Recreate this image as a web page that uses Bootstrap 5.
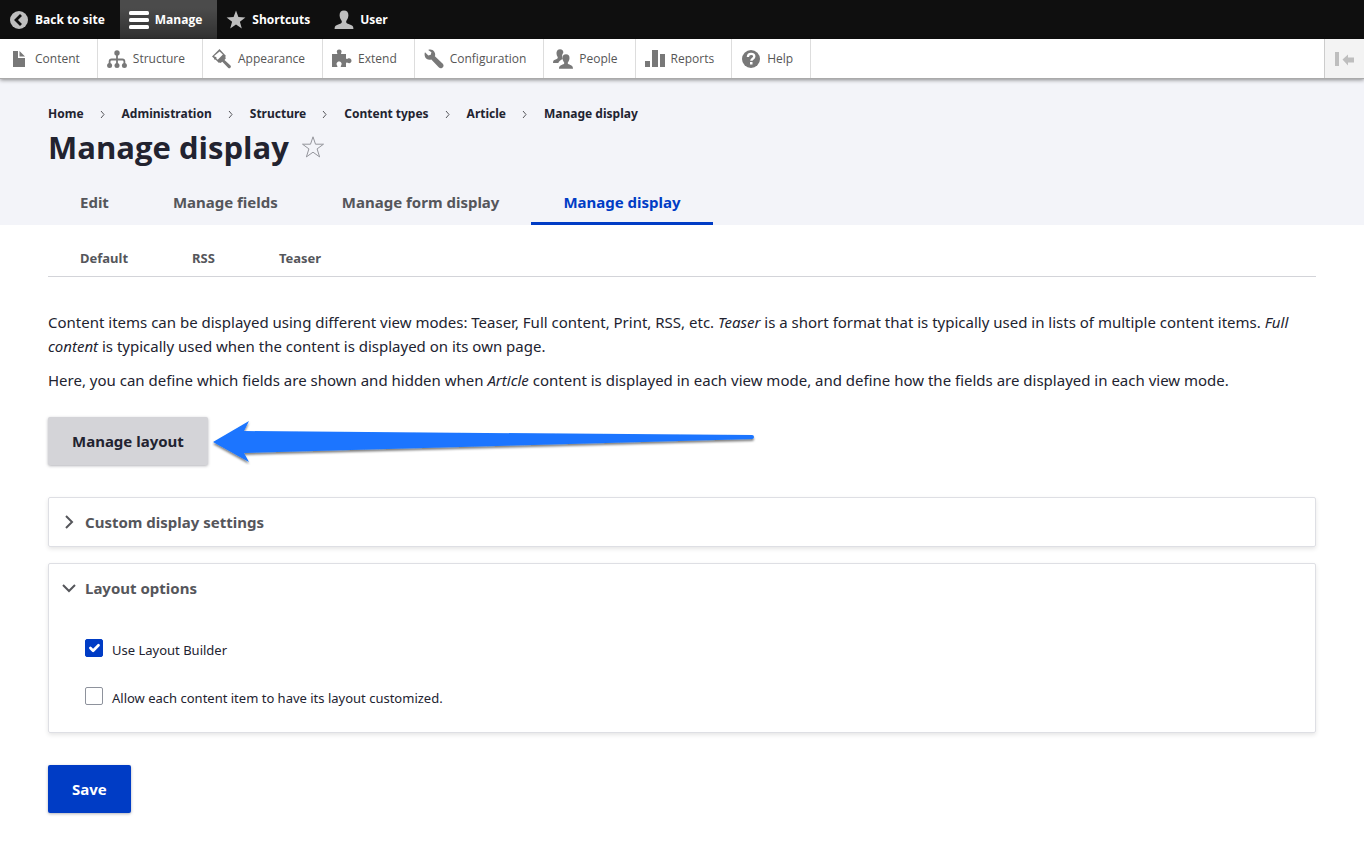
<!DOCTYPE html>
<html lang="en">
<head>
<meta charset="utf-8">
<meta name="viewport" content="width=device-width, initial-scale=1">
<title>Manage display</title>
<link rel="stylesheet" href="https://cdn.jsdelivr.net/npm/bootstrap@5.3.0/dist/css/bootstrap.min.css">
<style>
  :root {
    --ink: #222330;
    --muted: #55565b;
    --blue: #003cc5;
  }
  body { font: 15px/24px "Noto Sans", "Open Sans", sans-serif; color: var(--ink); background: #fff; }
  a { color: inherit; text-decoration: none; }

  .admin-bar, .admin-tray { font-family: "Open Sans", sans-serif; font-size: 12px; line-height: 20px; }
  .admin-bar a, .admin-tray a { height: 39px; padding: 0 17px 0 9px; gap: 6px; }
  .admin-bar svg, .admin-tray svg { width: 20px; height: 20px; }

  .admin-bar { background: #0f0f0f; font-weight: 700; color: #fff; }
  .admin-bar a { padding-right: 15px; }
  .admin-bar .open { background: linear-gradient(rgba(255,255,255,.25) 20%, transparent 200%); }
  .admin-bar svg { fill: #bebebe; }
  .admin-bar .open svg { fill: #fff; }

  .admin-tray { background: #fff; border-bottom: 1px solid #aaa; box-shadow: 0 1px 4px rgba(0,0,0,.45); color: #565656; position: relative; }
  .admin-tray a { border-right: 1px solid #ddd; }
  .admin-tray svg { fill: #787878; }
  .tray-toggle { width: 40px; background: #f3f3f3; border: 0; border-left: 1px solid #ccc; padding: 0; }
  .admin-tray .tray-toggle svg { fill: #bebebe; }

  .page-head { background: #f3f4f9; padding: 24px 48px 0; }
  .crumbs { font-size: 12px; line-height: 22px; font-weight: 700; --bs-breadcrumb-margin-bottom: 0; }
  .crumbs svg { width: 38px; height: 12px; }
  .page-head h1 { font: 700 31px/44px "Open Sans", sans-serif; margin: 0; }
  .star-btn { border: 0; background: none; padding: 0; line-height: 0; }

  .tabs-main { margin-top: 10px; }
  .tabs-main a { padding: 11px 32px 8px; border-bottom: 3px solid transparent; font-size: 15px; line-height: 24px; font-weight: 700; color: var(--muted); }
  .tabs-main a.current { color: var(--blue); border-color: var(--blue); }
  .tabs-sub { border-bottom: 1px solid #d3d4d9; }
  .tabs-sub a { padding: 8px 32px 8px; font-size: 13px; line-height: 20px; font-weight: 700; color: var(--muted); }

  .page-body { padding: 15px 48px 28px; }
  .help-text { padding: 33px 0 15px; }
  .help-text p { margin: 0 0 10px; }

  .btn-cms { border: 0; border-radius: 2px; padding: 12px 24px; font-size: 15px; line-height: 24px; font-weight: 700; box-shadow: 0 1px 3px rgba(34,35,48,.35); }
  .btn-grey, .btn-grey:hover { background: #d4d4d8; color: var(--ink); }
  .btn-blue, .btn-blue:hover { background: var(--blue); color: #fff; }
  .section-gap { margin-top: 32px; }

  .panel { border: 1px solid #dedfe4; border-radius: 2px; box-shadow: 0 2px 4px rgba(0,0,0,.1); }
  .panel summary { list-style: none; display: flex; align-items: center; gap: 8px; padding: 12px; font-size: 15px; line-height: 24px; font-weight: 700; color: var(--muted); }
  .panel summary::-webkit-details-marker { display: none; }
  .panel summary svg { width: 16px; height: 16px; fill: none; stroke: var(--muted); stroke-width: 2; }
  .panel[open] summary svg { transform: rotate(90deg); }
  .panel-inner { padding: 24px 36px; font-size: 13px; line-height: 20px; }
  .panel-inner label { padding-top: 4px; }
  .panel-inner .form-check-input { width: 18px; height: 18px; margin: 0 1px 0 0; border: 1px solid #8e929c; border-radius: 2px; }
  .panel-inner .form-check-input:checked { background-color: var(--blue); border-color: var(--blue); background-size: 18px; }
</style>
</head>
<body>

<nav class="admin-bar d-flex" aria-label="Toolbar">
  <a href="#" class="d-flex align-items-center"><svg viewBox="0 0 20 20"><circle cx="10" cy="10" r="9"/><path d="M12 5l-5 5 5 5" fill="none" stroke="#0f0f0f" stroke-width="2.8"/></svg>Back to site</a>
  <a href="#" class="open d-flex align-items-center"><svg viewBox="0 0 20 20"><rect y="1" width="20" height="4" rx="1.5"/><rect y="8" width="20" height="4" rx="1.5"/><rect y="15" width="20" height="4" rx="1.5"/></svg>Manage</a>
  <a href="#" class="d-flex align-items-center"><svg viewBox="0 0 20 20"><path d="M10 .5l2.4 6.600 7 .3-5.500 4.300 1.900 6.800L10 14.600l-5.800 3.900 1.900-6.800L.6 7.400l7-.3z"/></svg>Shortcuts</a>
  <a href="#" class="d-flex align-items-center"><svg viewBox="0 0 20 20"><path d="M10 .5c3 0 4.600 2 4.400 4.900-.2 2.500-1.200 4.200-2 5.300-.5.900-.2 2.200.8 2.700 2.600 1 5.500 1.800 5.900 3.300.2.900.3 1.700.3 2.300H.6c0-.6 0-1.400.3-2.300.4-1.500 3.300-2.300 5.900-3.300 1-.5 1.300-1.800.8-2.700-.8-1.100-1.800-2.800-2-5.300C5.400 2.500 7 .5 10 .5z"/></svg>User</a>
</nav>

<nav class="admin-tray d-flex" aria-label="Administration menu">
  <a href="#" class="d-flex align-items-center"><svg viewBox="0 0 20 20"><path d="M4 2h5v7h7v9H4z"/><path d="M10.500 2l5.500 5.500h-5.500z"/></svg>Content</a>
  <a href="#" class="d-flex align-items-center"><svg viewBox="0 0 20 20"><circle cx="10" cy="4" r="2.700"/><circle cx="2.600" cy="16.500" r="2.500"/><circle cx="10" cy="16.500" r="2.500"/><circle cx="17.400" cy="16.500" r="2.500"/><path d="M10 5v11M2.600 16v-3.500q0-2 2-2h10.800q2 0 2 2V16" fill="none" stroke="#787878" stroke-width="1.800"/></svg>Structure</a>
  <a href="#" class="d-flex align-items-center"><svg viewBox="0 0 20 20"><path d="M7.500 0L0 7.500l2 1.700.2 1.400 1.500.1 3.300 3.300L14 7z"/><path d="M7.600 2.400l3.300 3.200-5.200 5.200-1.200-1.100-.2-1.700-1.500-.3-.7-.7z" fill="#fff"/><path d="M12 7l2 2-1.500 2 6 5.600a1.600 1.600 0 0 1-2.200 2.300l-6-6.100L8.500 14l-2-1.500z"/></svg>Appearance</a>
  <a href="#" class="d-flex align-items-center"><svg viewBox="0 0 20 20"><path d="M0 5h4.700c.9 0 .8-.7.4-1.300C4.300 2.200 5.200.5 7.200.5s2.900 1.700 2.100 3.200c-.4.600-.5 1.300.4 1.300H14v4c0 1 .8 1.200 1.500.8 2-1.200 4 0 4 2s-2 3.200-4 2c-.7-.4-1.500-.2-1.500.8V18H9.500c-.9 0-1-.7-.5-1.300 1.300-1.700.5-4.200-1.900-4.200s-3.200 2.500-1.900 4.200c.5.600.4 1.300-.5 1.300H0z"/></svg>Extend</a>
  <a href="#" class="d-flex align-items-center"><svg viewBox="0 0 20 20"><path d="M1 3.200l3.300 3.200 2.500-.7.600-2.500L4.200.9C6.700.1 9 .8 10.300 2.700c1 1.500 1.100 3 .6 4.600l7.900 7.400c1.400 1.500.7 3.700-.8 4.300-1.300.6-2.400.2-3.300-.8l-7.400-7.700C4.500 11.300 2.200 10.300 1.200 8.300.5 6.500.3 4.800 1 3.200z"/></svg>Configuration</a>
  <a href="#" class="d-flex align-items-center"><svg viewBox="0 0 20 20"><path d="M7 .3c2.300 0 3.500 1.300 3.300 3.500C9 5 8.700 7.500 9.800 10c-2.300 1-3.800 2-4.500 4H0c0-2.600 1-2.900 3.700-3.900 1.200-.5 1.300-1.500.7-2.500C3 5 3 .3 7 .3z"/><path d="M13 5.200c2.300 0 3.700 1.500 3.500 4-.1 1.900-.8 3.100-1.500 4-.5.800-.2 1.700.7 2.100 2.300.9 4.300 1.400 4.300 4.500H6c0-3.100 2-3.600 4.300-4.500.9-.4 1.200-1.300.7-2.100-.7-.9-1.400-2.100-1.500-4-.2-2.500 1.200-4 3.500-4z"/></svg>People</a>
  <a href="#" class="d-flex align-items-center"><svg viewBox="0 0 20 20"><path d="M0 12h5v6H0zM7 1h6v17H7zM15 5h5v13h-5z"/></svg>Reports</a>
  <a href="#" class="d-flex align-items-center"><svg viewBox="0 0 20 20"><circle cx="10" cy="10" r="9"/><path d="M6.900 8c0-2.200 1.300-3.100 3.200-3.100s3.200 1 3.200 2.600c0 2.200-3 2.200-3 4.300" fill="none" stroke="#fff" stroke-width="2.300"/><rect x="9" y="13" width="2.500" height="2.500" fill="#fff"/></svg>Help</a>
  <button type="button" class="tray-toggle ms-auto" aria-label="Vertical orientation"><svg viewBox="0 0 20 20"><path d="M0 3h4v14H0zM7.500 10.500L13 5.500v3h6v5h-6v3z"/></svg></button>
</nav>

<header class="page-head">
  <nav aria-label="Breadcrumb">
    <ol class="crumbs breadcrumb align-items-center">
      <li><a href="#">Home</a></li>
      <li class="d-flex align-items-center"><svg viewBox="0 0 38 12" fill="none" stroke="#55565b" aria-hidden="true"><path d="M17 3l3 3.500-3 3.500"/></svg><a href="#">Administration</a></li>
      <li class="d-flex align-items-center"><svg viewBox="0 0 38 12" fill="none" stroke="#55565b" aria-hidden="true"><path d="M17 3l3 3.500-3 3.500"/></svg><a href="#">Structure</a></li>
      <li class="d-flex align-items-center"><svg viewBox="0 0 38 12" fill="none" stroke="#55565b" aria-hidden="true"><path d="M17 3l3 3.500-3 3.500"/></svg><a href="#">Content types</a></li>
      <li class="d-flex align-items-center"><svg viewBox="0 0 38 12" fill="none" stroke="#55565b" aria-hidden="true"><path d="M17 3l3 3.500-3 3.500"/></svg><a href="#">Article</a></li>
      <li class="d-flex align-items-center"><svg viewBox="0 0 38 12" fill="none" stroke="#55565b" aria-hidden="true"><path d="M17 3l3 3.500-3 3.500"/></svg><a href="#">Manage display</a></li>
    </ol>
  </nav>
  <div class="d-flex align-items-center gap-2">
    <h1>Manage display</h1>
    <button type="button" class="star-btn ms-1" aria-label="Add to shortcuts"><svg width="24" height="24" viewBox="0 0 24 24" fill="none" stroke="#94959c"><path d="M12 1.800l2.500 7.400h8l-6.400 4.700 2.500 8L12 17.200l-6.600 4.700 2.500-8L1.500 9.200h8z"/></svg></button>
  </div>
  <nav class="tabs-main d-flex" aria-label="Primary tabs">
    <a href="#">Edit</a>
    <a href="#">Manage fields</a>
    <a href="#">Manage form display</a>
    <a href="#" class="current" aria-current="page">Manage display</a>
  </nav>
</header>

<main class="page-body">
  <nav class="tabs-sub d-flex" aria-label="Secondary tabs">
    <a href="#">Default</a>
    <a href="#">RSS</a>
    <a href="#">Teaser</a>
  </nav>

  <div class="help-text">
    <p>Content items can be displayed using different view modes: Teaser, Full content, Print, RSS, etc. <em>Teaser</em> is a short format that is typically used in lists of multiple content items. <em>Full content</em> is typically used when the content is displayed on its own page.</p>
    <p>Here, you can define which fields are shown and hidden when <em>Article</em> content is displayed in each view mode, and define how the fields are displayed in each view mode.</p>
  </div>

  <form>
    <div class="d-flex align-items-center gap-1">
      <button type="button" class="btn btn-cms btn-grey flex-shrink-0">Manage layout</button>
      <svg width="546" height="48" viewBox="0 0 546 48" aria-hidden="true">
        <defs><filter id="soft" x="-5%" y="-20%" width="110%" height="150%"><feDropShadow dx="0" dy="2" stdDeviation="1" flood-color="#000" flood-opacity=".5"/></filter></defs>
        <path d="M1 25L37 4 32 14 540 18a2 2 0 0 1 0 4L32 36 37 45z" fill="#1a75ff" filter="url(#soft)"/>
      </svg>
    </div>

    <details class="panel section-gap">
      <summary><svg viewBox="0 0 16 16"><path d="M5 2l6 6-6 6"/></svg>Custom display settings</summary>
    </details>

    <details class="panel mt-3" open>
      <summary><svg viewBox="0 0 16 16"><path d="M5 2l6 6-6 6"/></svg>Layout options</summary>
      <div class="panel-inner d-flex flex-column gap-4">
        <div class="d-flex align-items-center gap-2">
          <input class="form-check-input" type="checkbox" id="use-builder" checked>
          <label for="use-builder">Use Layout Builder</label>
        </div>
        <div class="d-flex align-items-center gap-2">
          <input class="form-check-input" type="checkbox" id="allow-custom">
          <label for="allow-custom">Allow each content item to have its layout customized.</label>
        </div>
      </div>
    </details>

    <button type="submit" class="btn btn-cms btn-blue section-gap">Save</button>
  </form>
</main>

<script src="https://cdn.jsdelivr.net/npm/bootstrap@5.3.0/dist/js/bootstrap.bundle.min.js"></script>
</body>
</html>
